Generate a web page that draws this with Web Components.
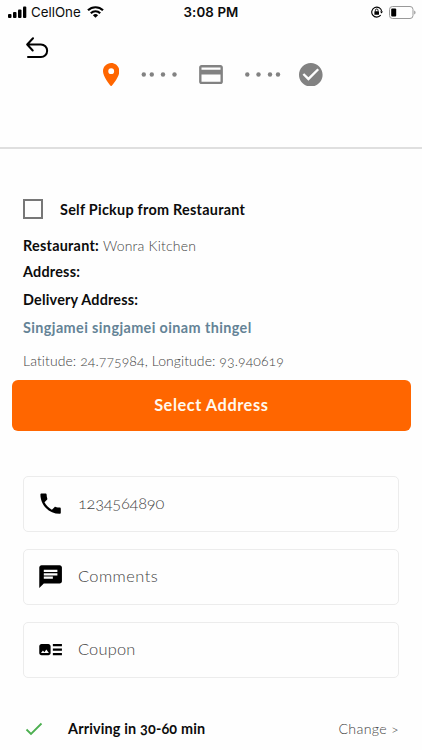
<!DOCTYPE html>
<html lang="en">
<head>
<meta charset="utf-8">
<title>Checkout</title>
<style>
  body {
    margin: 0;
    background: #fefefe;
    color: #0c0c0c;
    font-family: Lato, "Open Sans", sans-serif;
    font-variant-numeric: oldstyle-nums;
  }
</style>
</head>
<body>
<checkout-page>
  <status-bar slot="status" carrier="CellOne" time="3:08 PM"></status-bar>
  <checkout-steps slot="header"></checkout-steps>
  <pickup-option>Self Pickup from Restaurant</pickup-option>
  <info-line style="height: 26px; --spacing: 0.25px" label="Restaurant:"><span style="letter-spacing: 0.2px">Wonra Kitchen</span></info-line>
  <info-line style="height: 27px; --spacing: 0.22px" label="Address:"></info-line>
  <info-line style="height: 28px; --spacing: 0.2px" label="Delivery Address:"></info-line>
  <info-line style="height: 28px; --label: #648396; --spacing: 0.4px" label="Singjamei singjamei oinam thingel"></info-line>
  <info-line style="height: 39px; letter-spacing: 0.08px">Latitude: 24.775984, Longitude: 93.940619</info-line>
  <action-button>Select Address</action-button>
  <input-fields>
    <icon-field icon="phone" style="letter-spacing: -0.25px">1234564890</icon-field>
    <icon-field icon="comment" style="letter-spacing: 0.46px">Comments</icon-field>
    <icon-field icon="coupon" style="letter-spacing: 0.2px">Coupon</icon-field>
  </input-fields>
  <arrival-row slot="footer">Arriving in 30-60 min<span slot="action">Change &gt;</span></arrival-row>
</checkout-page>

<script>
const define = (name, html, setup) => {
  const template = document.createElement("template");
  template.innerHTML = html;

  customElements.define(name, class extends HTMLElement {
    constructor() {
      super();
      this.attachShadow({ mode: "open" });
      this.shadowRoot.append(template.content.cloneNode(true));
    }

    connectedCallback() {
      if (setup) setup(this, this.shadowRoot);
    }
  });
};

const icons = {
  phone: '<path d="M6.62 10.79c1.44 2.83 3.76 5.14 6.59 6.59l2.2-2.2c.27-.27.67-.36 1.02-.24 1.12.37 2.33.57 3.57.57.55 0 1 .45 1 1V20c0 .55-.45 1-1 1-9.39 0-17-7.61-17-17 0-.55.45-1 1-1h3.5c.55 0 1 .45 1 1 0 1.25.2 2.45.57 3.57.11.35.03.74-.25 1.02l-2.2 2.2z"/>',
  comment: '<path d="M20 2H4c-1.1 0-1.99.9-1.99 2L2 22l4-4h14c1.1 0 2-.9 2-2V4c0-1.1-.9-2-2-2zM6 9h12v2H6V9zm8 5H6v-2h8v2zm4-6H6V6h12v2z"/>',
  coupon: '<path d="M22 13h-8v-2h8v2zm0-6h-8v2h8V7zm-8 10h8v-2h-8v2zm-2-8v6c0 1.1-.9 2-2 2H4c-1.1 0-2-.9-2-2V9c0-1.1.9-2 2-2h6c1.1 0 2 .9 2 2zm-1.5 6l-2.25-3-1.75 2.26-1.25-1.51L3.5 15h7z"/>',
};

define("checkout-page", `
<style>
  :host { display: flex; flex-direction: column; width: 422px; height: 750px; overflow: hidden; }
  main { flex: 1; }
  ::slotted(*) { box-sizing: border-box; }
</style>
<slot name="status"></slot>
<slot name="header"></slot>
<main><slot></slot></main>
<slot name="footer"></slot>
`);

define("status-bar", `
<style>
  :host {
    display: grid;
    grid-template-columns: 1fr auto 1fr;
    align-items: center;
    height: 24px;
    padding: 0 6px 0 8px;
    font: 13.3px Inter, sans-serif;
    font-variant-numeric: normal;
  }
  div { display: flex; align-items: center; }
  .right { justify-content: flex-end; gap: 6px; }
  .time { margin-right: 2px; font-weight: 600; font-size: 13.3px; letter-spacing: 0.1px; }
  .carrier { margin: 0 6px 0 4px; }
  svg { display: block; }
</style>
<div>
  <svg width="19" height="13" viewBox="0 0 19 13">
    <rect x="0" y="8" width="3.5" height="4" rx="1"/>
    <rect x="5" y="6" width="3.5" height="6" rx="1"/>
    <rect x="10" y="3.5" width="3.5" height="8.5" rx="1"/>
    <rect x="15" y="0.5" width="3.3" height="11.5" rx="1"/>
  </svg>
  <span class="carrier"></span>
  <svg width="17" height="12" viewBox="0 0 17 12">
    <g fill="none" stroke="#000" stroke-width="2.2">
      <path d="M1 4.3a10.7 10.7 0 0 1 15 0"/>
      <path d="M3.8 7.2a6.7 6.7 0 0 1 9.4 0"/>
    </g>
    <path d="M5.9 9.2a3.8 3.8 0 0 1 5.2 0L8.5 11.8z"/>
  </svg>
</div>
<span class="time"></span>
<div class="right">
  <svg width="12" height="12" viewBox="0 0 12 12">
    <path d="M9.7 9.2A5 5 0 1 1 10.7 5.5" fill="none" stroke="#000" stroke-width="1.1"/>
    <path d="M9 5.5h3L10.5 7.6z"/>
    <rect x="3.4" y="5.2" width="4.6" height="3.5" rx=".5"/>
    <path d="M4.4 5.500V4.3a1.3 1.3 0 0 1 2.6 0v1.2" fill="none" stroke="#000" stroke-width=".9"/>
  </svg>
  <svg width="27" height="13" viewBox="0 0 27 13">
    <rect x=".5" y=".5" width="23.5" height="12" rx="3" fill="none" stroke="#999"/>
    <rect x="2.2" y="2.4" width="5" height="8.2" rx="1"/>
    <path d="M25.2 4.5c1.8.7 1.8 3.3 0 4z" fill="#999"/>
  </svg>
</div>
`, (el, root) => {
  root.querySelector(".carrier").textContent = el.getAttribute("carrier");
  root.querySelector(".time").textContent = el.getAttribute("time");
});

define("checkout-steps", `
<style>
  :host {
    display: grid;
    grid-template-columns: 99px 224px;
    align-items: start;
    height: 125px;
    border-bottom: 2px solid #dfdfdf;
  }
  .back { margin: 12.7px 0 0 25px; }
  .steps { display: grid; grid-template-columns: 24px 76px 24px 76px 24px; align-items: center; justify-items: center; height: 24px; margin-top: 38.5px; }
  svg { display: block; }
</style>
<svg class="back" width="24" height="22" viewBox="0 0 24 22" fill="none" stroke="#000" stroke-width="2" stroke-linecap="round" stroke-linejoin="round">
  <path d="M8 1.2L2.2 7.500 7.700 13.500M2.500 7.500H15.900a6.200 6.200 0 0 1 0 12.500H3"/>
</svg>
<div class="steps">
  <svg width="16.4" height="23.4" viewBox="5 2 14 20" preserveAspectRatio="none" fill="#ff6600">
    <path d="M12 2C8.13 2 5 5.13 5 9c0 5.25 7 13 7 13s7-7.75 7-13c0-3.87-3.13-7-7-7zm0 9.5a2.5 2.5 0 0 1 0-5 2.5 2.5 0 0 1 0 5z"/>
  </svg>
  <svg width="76" height="5" fill="#828282">
    <circle cx="20.8" cy="2.5" r="2.2"/><circle cx="28.8" cy="2.5" r="2.2"/><circle cx="40" cy="2.5" r="2.2"/><circle cx="51.5" cy="2.5" r="2.2"/>
  </svg>
  <svg width="24" height="19" viewBox="2 4 20 16" fill="#828282">
    <path d="M20 4H4c-1.11 0-1.99.89-1.99 2L2 18c0 1.11.89 2 2 2h16c1.11 0 2-.89 2-2V6c0-1.11-.89-2-2-2zm0 14H4v-6h16v6zm0-10H4V6h16v2z"/>
  </svg>
  <svg width="76" height="5" fill="#828282">
    <circle cx="24.3" cy="2.5" r="2.2"/><circle cx="35.5" cy="2.5" r="2.2"/><circle cx="47" cy="2.5" r="2.2"/><circle cx="55" cy="2.5" r="2.2"/>
  </svg>
  <svg width="23.6" height="23.6" viewBox="2 2 20 20" fill="#828282">
    <path d="M12 2C6.48 2 2 6.48 2 12s4.48 10 10 10 10-4.48 10-10S17.52 2 12 2zm-2 15l-5-5 1.41-1.41L10 14.17l7.59-7.59L19 8l-9 9z"/>
  </svg>
</div>
`);

define("pickup-option", `
<style>
  :host { display: flex; align-items: center; gap: 17px; height: 83px; padding: 49px 0 12px 23px; font-size: 14.4px; font-weight: 700; letter-spacing: 0.26px; }
  i { box-sizing: border-box; width: 20px; height: 20px; border: 2px solid #777; }
</style>
<i></i><slot></slot>
`);

define("info-line", `
<style>
  :host { display: flex; align-items: center; gap: 4px; padding-left: 23px; font-size: 14px; font-weight: 300; color: #444; white-space: nowrap; }
  b { color: var(--label, #0c0c0c); font-size: 14.4px; font-weight: 700; letter-spacing: var(--spacing, 0); }
  b:empty { display: none; }
</style>
<b></b><slot></slot>
`, (el, root) => {
  root.querySelector("b").textContent = el.getAttribute("label") || "";
});

define("action-button", `
<style>
  :host { display: block; padding: 0 11.5px 0 12px; }
  button { display: block; width: 100%; height: 51px; padding: 0 0 2px; border: none; border-radius: 6px; background: #ff6600; color: #fff8ed; font: 700 16.4px Lato, sans-serif; letter-spacing: 0.53px; }
</style>
<button><slot></slot></button>
`);

define("input-fields", `
<style>
  :host { display: flex; flex-direction: column; gap: 17px; padding: 45px 23px 0; }
</style>
<slot></slot>
`);

define("icon-field", `
<style>
  :host { box-sizing: border-box; display: flex; align-items: center; gap: 13.4px; height: 56px; padding-left: 13.4px; border: 1px solid #ececec; border-radius: 5px; font-size: 16.4px; font-weight: 300; color: #444; }
  svg { width: 27.2px; height: 27.2px; fill: #000; }
  span { padding-bottom: 3px; }
</style>
<svg viewBox="0 0 24 24"></svg><span><slot></slot></span>
`, (el, root) => {
  root.querySelector("svg").innerHTML = icons[el.getAttribute("icon")];
});

define("arrival-row", `
<style>
  :host { display: flex; align-items: center; height: 43px; padding: 0 23px 0 25px; font-size: 14.4px; font-weight: 700; letter-spacing: 0.16px; }
  svg { margin-right: 25px; }
  .action { margin-left: auto; color: #444; font-size: 14.2px; font-weight: 300; letter-spacing: 0.3px; }
</style>
<svg width="18" height="14" viewBox="0 0 18 14" fill="none" stroke="#4caf50" stroke-width="1.8"><path d="M1.5 7.5L6 12 16.5 1.500"/></svg>
<slot></slot>
<span class="action"><slot name="action"></slot></span>
`);
</script>
</body>
</html>
